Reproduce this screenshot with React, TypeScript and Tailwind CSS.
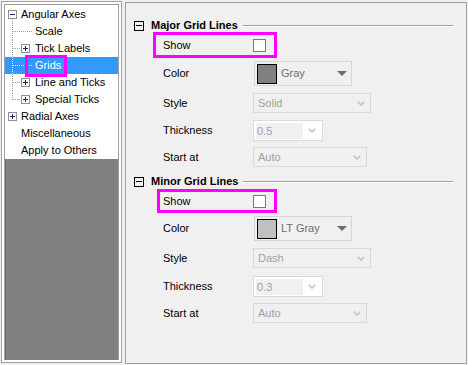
import React from 'react';

const font = { fontFamily: '"Liberation Sans", Arial, sans-serif' };

const ExpandBox = ({ plus }: { plus?: boolean }) => (
  <span className="relative w-[9px] h-[9px] shrink-0 border border-[#919191] bg-white flex items-center justify-center">
    <span className="w-[5px] h-[1px] bg-[#1c2560]" />
    {plus && <span className="absolute w-[1px] h-[5px] bg-[#1c2560]" />}
  </span>
);

const Dots = ({ leaf, last, light }: { leaf?: boolean; last?: boolean; light?: boolean }) => {
  const c = light ? '#d8ebff' : '#a0a0a0';
  return (
    <svg width={leaf ? 30 : 16} height={17} className="shrink-0">
      <line x1="7.5" y1="0" x2="7.5" y2={last ? 9 : 17} stroke={c} strokeDasharray="1 1" />
      <line x1="8" y1="8.5" x2={leaf ? 27 : 16} y2="8.5" stroke={c} strokeDasharray="1 1" />
    </svg>
  );
};

const Chevron = () => (
  <svg width="8" height="5" className="shrink-0">
    <polyline points="0.8,0.8 4,4 7.2,0.8" fill="none" stroke="#c2c2c2" strokeWidth="1.6" />
  </svg>
);

const Header = ({ title }: { title: string }) => (
  <div className="flex items-center h-[13px] pl-[8px] pr-[13px]">
    <span className="w-[10px] h-[10px] shrink-0 border border-black flex items-center justify-center">
      <span className="w-[6px] h-[1px] bg-black" />
    </span>
    <span className="ml-[7px] font-bold text-[11px] text-black whitespace-nowrap">{title}</span>
    <div className="flex-1 ml-[5px] h-[2px] border-t border-t-[#a0a0a0] border-b border-b-white" />
  </div>
);

const ShowRow = ({ ml, w, h, pl }: { ml: string; w: string; h: string; pl: string }) => (
  <div className={`flex items-center border-[3px] border-[#ff00ff] ${ml} ${w} ${h} ${pl}`}>
    <span className="w-[90px] text-[11px]">Show</span>
    <span className="w-[13px] h-[13px] border border-[#7a7a7a] bg-white" />
  </div>
);

const Label = ({ children }: { children: React.ReactNode }) => (
  <span className="w-[90px] shrink-0 text-[11px] text-black">{children}</span>
);

const ColorRow = ({ fill, name }: { fill: string; name: string }) => (
  <div className="flex items-center mt-[3px] pl-[37px]">
    <Label>Color</Label>
    <div className="ml-[1px] w-[98px] h-[25px] border border-[#d6d6d6] flex items-center pl-[2px] pr-[4px]">
      <span className={`w-[20px] h-[20px] border border-black ${fill}`} />
      <span className="ml-[4px] text-[11px] text-[#6d6d6d] flex-1">{name}</span>
      <svg width="10" height="5">
        <polygon points="0,0 10,0 5,5" fill="#6d6d6d" />
      </svg>
    </div>
  </div>
);

const DisabledCombo = ({ label, value, w, mt }: { label: string; value: string; w: string; mt: string }) => (
  <div className={`flex items-center pl-[37px] ${mt}`}>
    <Label>{label}</Label>
    <div className={`h-[20px] border border-[#d9d9d9] flex items-center pl-[4px] pr-[5px] ${w}`}>
      <span className="flex-1 text-[11px] text-[#a0a0a0]">{value}</span>
      <Chevron />
    </div>
  </div>
);

const ThicknessRow = ({ value, mt }: { value: string; mt: string }) => (
  <div className={`flex items-center pl-[37px] ${mt}`}>
    <Label>Thickness</Label>
    <div className="w-[70px] h-[21px] border border-[#dadada] bg-white flex items-center p-[2px]">
      <span className="w-[47px] h-[16px] bg-[#f0f0f0] text-[11px] text-[#a0a0a0] pl-[1px] leading-[16px]">{value}</span>
      <span className="flex-1 flex justify-center">
        <Chevron />
      </span>
    </div>
  </div>
);

const TreeRow = ({ children, selected }: { children: React.ReactNode; selected?: boolean }) => (
  <div className={`relative flex items-center h-[17px] text-[11px] ${selected ? 'bg-[#3399ff] text-white' : 'text-black'}`}>
    {children}
  </div>
);

export default function App() {
  return (
    <div className="w-[468px] h-[365px] bg-[#f0f0f0] flex items-start" style={font}>
      {/* left tree */}
      <div className="ml-[1px] mt-[1px] w-[121px] h-[362px] border border-[#a0a0a0] bg-white p-[2px] flex flex-col">
        <div className="flex-1 border-x border-t border-[#a0a0a0] flex flex-col">
          <div className="pt-[1px]">
            <TreeRow>
              <span className="pl-[3px]" />
              <ExpandBox />
              <span className="ml-[4px]">Angular Axes</span>
              <svg width="1" height="4" className="absolute left-[7px] top-[13px]">
                <line x1="0.5" y1="0" x2="0.5" y2="4" stroke="#a0a0a0" strokeDasharray="1 1" />
              </svg>
            </TreeRow>
            <TreeRow>
              <Dots leaf />
              <span>Scale</span>
            </TreeRow>
            <TreeRow>
              <Dots />
              <ExpandBox plus />
              <span className="ml-[5px]">Tick Labels</span>
            </TreeRow>
            <TreeRow selected>
              <Dots leaf light />
              <span>Grids</span>
              <span className="absolute left-[20px] top-[-2px] w-[42px] h-[22px] border-[3px] border-[#ff00ff]" />
            </TreeRow>
            <TreeRow>
              <Dots />
              <ExpandBox plus />
              <span className="ml-[5px]">Line and Ticks</span>
            </TreeRow>
            <TreeRow>
              <Dots last />
              <ExpandBox plus />
              <span className="ml-[5px]">Special Ticks</span>
            </TreeRow>
            <TreeRow>
              <span className="pl-[3px]" />
              <ExpandBox plus />
              <span className="ml-[4px]">Radial Axes</span>
            </TreeRow>
            <TreeRow>
              <span className="pl-[16px]">Miscellaneous</span>
            </TreeRow>
            <TreeRow>
              <span className="pl-[16px]">Apply to Others</span>
            </TreeRow>
          </div>
          <div className="flex-1 bg-[#808080] border-l border-[#6a6a6a]" />
        </div>
      </div>

      {/* right settings */}
      <div className="ml-[3px] mt-[2px] w-[342px] h-[362px] border border-[#a0a0a0] bg-[#f0f0f0] pt-[16px]">
        <Header title="Major Grid Lines" />
        <ShowRow ml="ml-[27px]" w="w-[124px]" h="h-[26px]" pl="pl-[7px]" />
        <ColorRow fill="bg-[#808080]" name="Gray" />
        <DisabledCombo label="Style" value="Solid" w="w-[118px]" mt="mt-[7px]" />
        <ThicknessRow value="0.5" mt="mt-[7px]" />
        <DisabledCombo label="Start at" value="Auto" w="w-[114px]" mt="mt-[6px]" />

        <div className="mt-[8px]">
          <Header title="Minor Grid Lines" />
        </div>
        <div className="mt-[1px]">
          <ShowRow ml="ml-[31px]" w="w-[120px]" h="h-[24px]" pl="pl-[3px]" />
        </div>
        <ColorRow fill="bg-[#c0c0c0]" name="LT Gray" />
        <DisabledCombo label="Style" value="Dash" w="w-[118px]" mt="mt-[7px]" />
        <ThicknessRow value="0.3" mt="mt-[8px]" />
        <DisabledCombo label="Start at" value="Auto" w="w-[114px]" mt="mt-[6px]" />
      </div>
    </div>
  );
}
